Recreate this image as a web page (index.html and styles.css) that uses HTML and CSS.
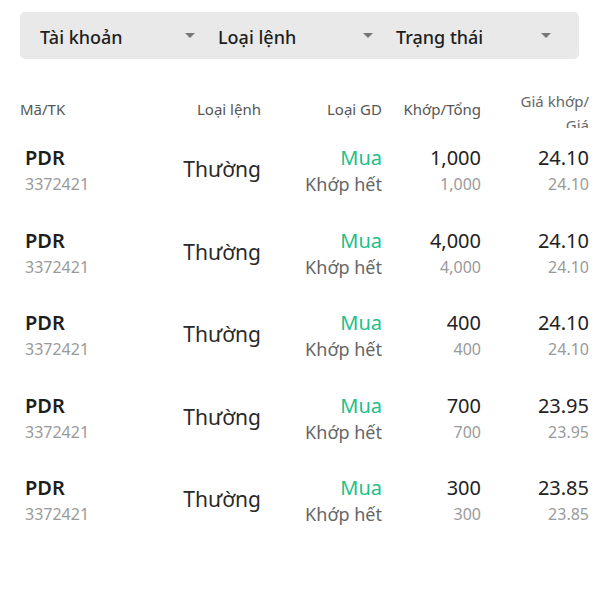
FILE: index.html
```html
<!DOCTYPE html>
<html lang="vi">
<head>
<meta charset="utf-8">
<link rel="stylesheet" href="styles.css">
</head>
<body>
<div class="page">
  <div class="filters">
    <div class="filter"><span>Tài khoản</span><i class="caret"></i></div>
    <div class="filter"><span>Loại lệnh</span><i class="caret"></i></div>
    <div class="filter"><span>Trạng thái</span><i class="caret"></i></div>
  </div>

  <div class="thead">
    <div class="th left pad-top">Mã/TK</div>
    <div class="th pad-top">Loại lệnh</div>
    <div class="th pad-top">Loại GD</div>
    <div class="th pad-top">Khớp/Tổng</div>
    <div class="th wrap">Giá khớp/<br>Giá</div>
  </div>

  <div class="rows">
    <div class="row">
      <div class="cell left"><div class="sym">PDR</div><div class="sub">3372421</div></div>
      <div class="cell mid type">Thường</div>
      <div class="cell"><div class="buy">Mua</div><div class="status">Khớp hết</div></div>
      <div class="cell"><div class="main">1,000</div><div class="sub">1,000</div></div>
      <div class="cell"><div class="main">24.10</div><div class="sub">24.10</div></div>
    </div>
    <div class="row">
      <div class="cell left"><div class="sym">PDR</div><div class="sub">3372421</div></div>
      <div class="cell mid type">Thường</div>
      <div class="cell"><div class="buy">Mua</div><div class="status">Khớp hết</div></div>
      <div class="cell"><div class="main">4,000</div><div class="sub">4,000</div></div>
      <div class="cell"><div class="main">24.10</div><div class="sub">24.10</div></div>
    </div>
    <div class="row">
      <div class="cell left"><div class="sym">PDR</div><div class="sub">3372421</div></div>
      <div class="cell mid type">Thường</div>
      <div class="cell"><div class="buy">Mua</div><div class="status">Khớp hết</div></div>
      <div class="cell"><div class="main">400</div><div class="sub">400</div></div>
      <div class="cell"><div class="main">24.10</div><div class="sub">24.10</div></div>
    </div>
    <div class="row">
      <div class="cell left"><div class="sym">PDR</div><div class="sub">3372421</div></div>
      <div class="cell mid type">Thường</div>
      <div class="cell"><div class="buy">Mua</div><div class="status">Khớp hết</div></div>
      <div class="cell"><div class="main">700</div><div class="sub">700</div></div>
      <div class="cell"><div class="main">23.95</div><div class="sub">23.95</div></div>
    </div>
    <div class="row">
      <div class="cell left"><div class="sym">PDR</div><div class="sub">3372421</div></div>
      <div class="cell mid type">Thường</div>
      <div class="cell"><div class="buy">Mua</div><div class="status">Khớp hết</div></div>
      <div class="cell"><div class="main">300</div><div class="sub">300</div></div>
      <div class="cell"><div class="main">23.85</div><div class="sub">23.85</div></div>
    </div>
  </div>
</div>
</body>
</html>
```

FILE: styles.css
```css
* { box-sizing: border-box; }
html, body { margin: 0; padding: 0; background: #fff; }
body {
  font-family: "Noto Sans", "Open Sans", sans-serif;
  color: #222;
  width: 600px;
  height: 600px;
  overflow: hidden;
}
.page { padding: 12px 11px 0 20px; }

.filters {
  display: grid;
  grid-template-columns: repeat(3, 178px);
  height: 47px;
  background: #e9e9e9;
  border-radius: 5px;
  margin-right: 10px;
}
.filter {
  display: flex;
  align-items: center;
  justify-content: space-between;
  padding: 0 3px 0 20px;
  font-size: 18px;
  font-weight: 500;
  color: #1e1e1e;
}
.filter span { position: relative; top: 1px; }
.caret {
  width: 0; height: 0;
  border-left: 5px solid transparent;
  border-right: 5px solid transparent;
  border-top: 5px solid #777;
}

.thead, .row {
  display: grid;
  grid-template-columns: 150px 91px 121px 99px 108px;
}
.thead {
  margin-top: 30px;
  height: 39px;
  overflow: hidden;
  align-items: start;
  font-size: 15px;
  color: #555;
  line-height: 22px;
}
.th { text-align: right; white-space: nowrap; }
.th.pad-top { padding-top: 9px; }
.th.left { text-align: left; }
.th.wrap { color: #666; line-height: 24px; }

.rows { padding-top: 16px; }
.row {
  height: 82.5px;
  align-items: start;
}
.cell { text-align: right; white-space: nowrap; }
.cell.left { text-align: left; padding-left: 5px; }
.cell.mid { align-self: start; padding-top: 12px; }

.sym { font-size: 20px; font-weight: 600; line-height: 27px; color: #1e1e1e; }
.sub { font-size: 16px; line-height: 27px; color: #9a9a9a; }
.type { font-size: 21px; color: #2a2a2a; line-height: 27px; }
.buy { font-size: 20px; color: #1fbf8a; line-height: 27px; }
.status { font-size: 18px; color: #666; line-height: 27px; }
.main { font-size: 20px; line-height: 27px; color: #222; }
.cell .sub { font-size: 16px; }
```
